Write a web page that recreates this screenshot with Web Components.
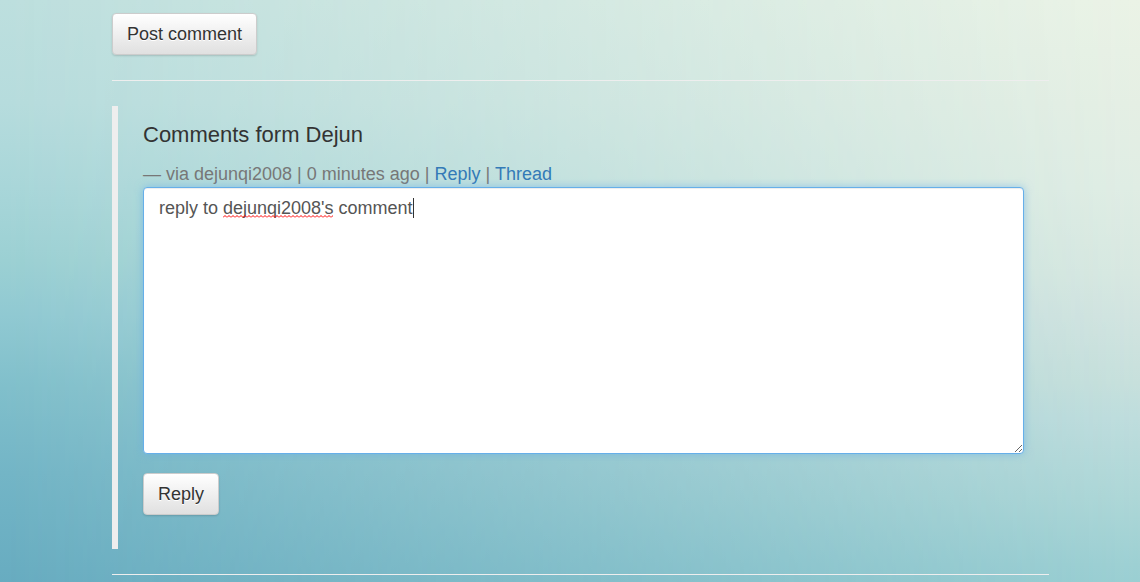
<!DOCTYPE html>
<html lang="en">
<head>
<meta charset="utf-8">
<title>Comments</title>
<style>
html{min-height:100%}
body{margin:0;font:18px/26px "Liberation Sans",Arial,sans-serif;color:#333}
</style>
</head>
<body>
<comment-page>
  <soft-button>Post comment</soft-button>
  <comment-rule></comment-rule>
  <comment-quote author="Dejun">
    <comment-meta slot="meta" user="dejunqi2008" age="0 minutes ago"></comment-meta>
    <reply-box slot="reply">reply to dejunqi2008's comment</reply-box>
    <soft-button slot="action">Reply</soft-button>
  </comment-quote>
  <comment-rule></comment-rule>
</comment-page>
<script>
const define = (name, html, setup) => customElements.define(name, class extends HTMLElement {
  constructor() {
    super();
    const t = document.createElement('template');
    t.innerHTML = html;
    this.attachShadow({ mode: 'open' }).append(t.content.cloneNode(true));
  }
  connectedCallback() { if (setup) setup(this, this.shadowRoot); }
});

/* The backdrop fades from a cool left gradient to a pale right one. */
define('comment-page', `<style>
:host{display:block;position:relative;box-sizing:border-box;min-height:100vh;padding:13px 91px 7px 112px;
background:linear-gradient(#bddfde 0,#b6dcdd 17%,#a8d6d9 31%,#9bd0d3 43%,#90c9d2 52%,#80bfcb 64%,#73b5c6 78%,#65aabf 100%)}
:host::before{content:"";position:absolute;inset:0;
background:linear-gradient(#ebf3e6 0,#e5efe4 17%,#e0ede4 31%,#d8e8e1 45%,#d2e4e0 52%,#c7e0dc 63%,#bfdddd 69%,#aed7d7 82%,#9ed0d3 93%,#97cdd1 100%);
-webkit-mask-image:linear-gradient(90deg,transparent,#000);mask-image:linear-gradient(90deg,transparent,#000)}
main{position:relative}
</style><main><slot></slot></main>`);

define('soft-button', `<style>
:host{display:block}
button{display:block;box-sizing:border-box;height:42px;padding:0 14px;border:1px solid #ccc;border-radius:4px;
font:inherit;color:#333;text-shadow:0 1px 0 #fff;background:linear-gradient(#fff,#e0e0e0);
box-shadow:inset 0 1px 0 rgba(255,255,255,.15),0 1px 2px rgba(0,0,0,.15);cursor:pointer}
</style><button type="button"><slot></slot></button>`);

define('comment-rule', `<style>
:host{display:block;padding:25px 0}
hr{margin:0;border:0;border-top:1px solid #eee}
</style><hr>`);

define('comment-quote', `<style>
:host{display:block}
blockquote{margin:0;padding:12px 25px 34px;border-left:6px solid #eee}
h2{margin:0 0 10px;font-size:22px;line-height:33px;font-weight:400}
.action{margin-top:19px}
</style><blockquote><h2>Comments form <span></span></h2>
<slot name="meta"></slot><slot name="reply"></slot><div class="action"><slot name="action"></slot></div></blockquote>`,
(el, root) => { root.querySelector('span').textContent = el.getAttribute('author'); });

define('comment-meta', `<style>
:host{display:block;color:#777}
footer{line-height:26px}
a{color:#337ab7;text-decoration:none}
</style><footer></footer>`,
(el, root) => {
  root.querySelector('footer').innerHTML =
    `— via ${el.getAttribute('user')} | ${el.getAttribute('age')} | <a href="#reply">Reply</a> | <a href="#thread">Thread</a>`;
});

define('reply-box', `<style>
:host{display:block;position:relative}
textarea{display:block;box-sizing:border-box;width:100%;height:267px;margin:0;padding:7px 15px;
border:1px solid #66afe9;border-radius:4px;outline:0;resize:vertical;background:#fff;color:#555;font:inherit;caret-color:transparent;
box-shadow:inset 0 1px 1px rgba(0,0,0,.075),0 0 8px rgba(102,175,233,.6)}
.spell{position:absolute;left:80px;top:28px}
.caret{position:absolute;left:270px;top:11px;width:1px;height:20px;background:#333}
</style><textarea aria-label="Reply text" spellcheck="false"></textarea>
<svg class="spell" width="110" height="3" aria-hidden="true"><defs><pattern id="w" width="4" height="3" patternUnits="userSpaceOnUse"><path d="M0 2.5L2 .5L4 2.5" fill="none" stroke="#f00"/></pattern></defs><rect width="110" height="3" fill="url(#w)"/></svg>
<span class="caret" aria-hidden="true"></span>`,
(el, root) => { root.querySelector('textarea').value = el.textContent.trim(); });
</script>
</body>
</html>
